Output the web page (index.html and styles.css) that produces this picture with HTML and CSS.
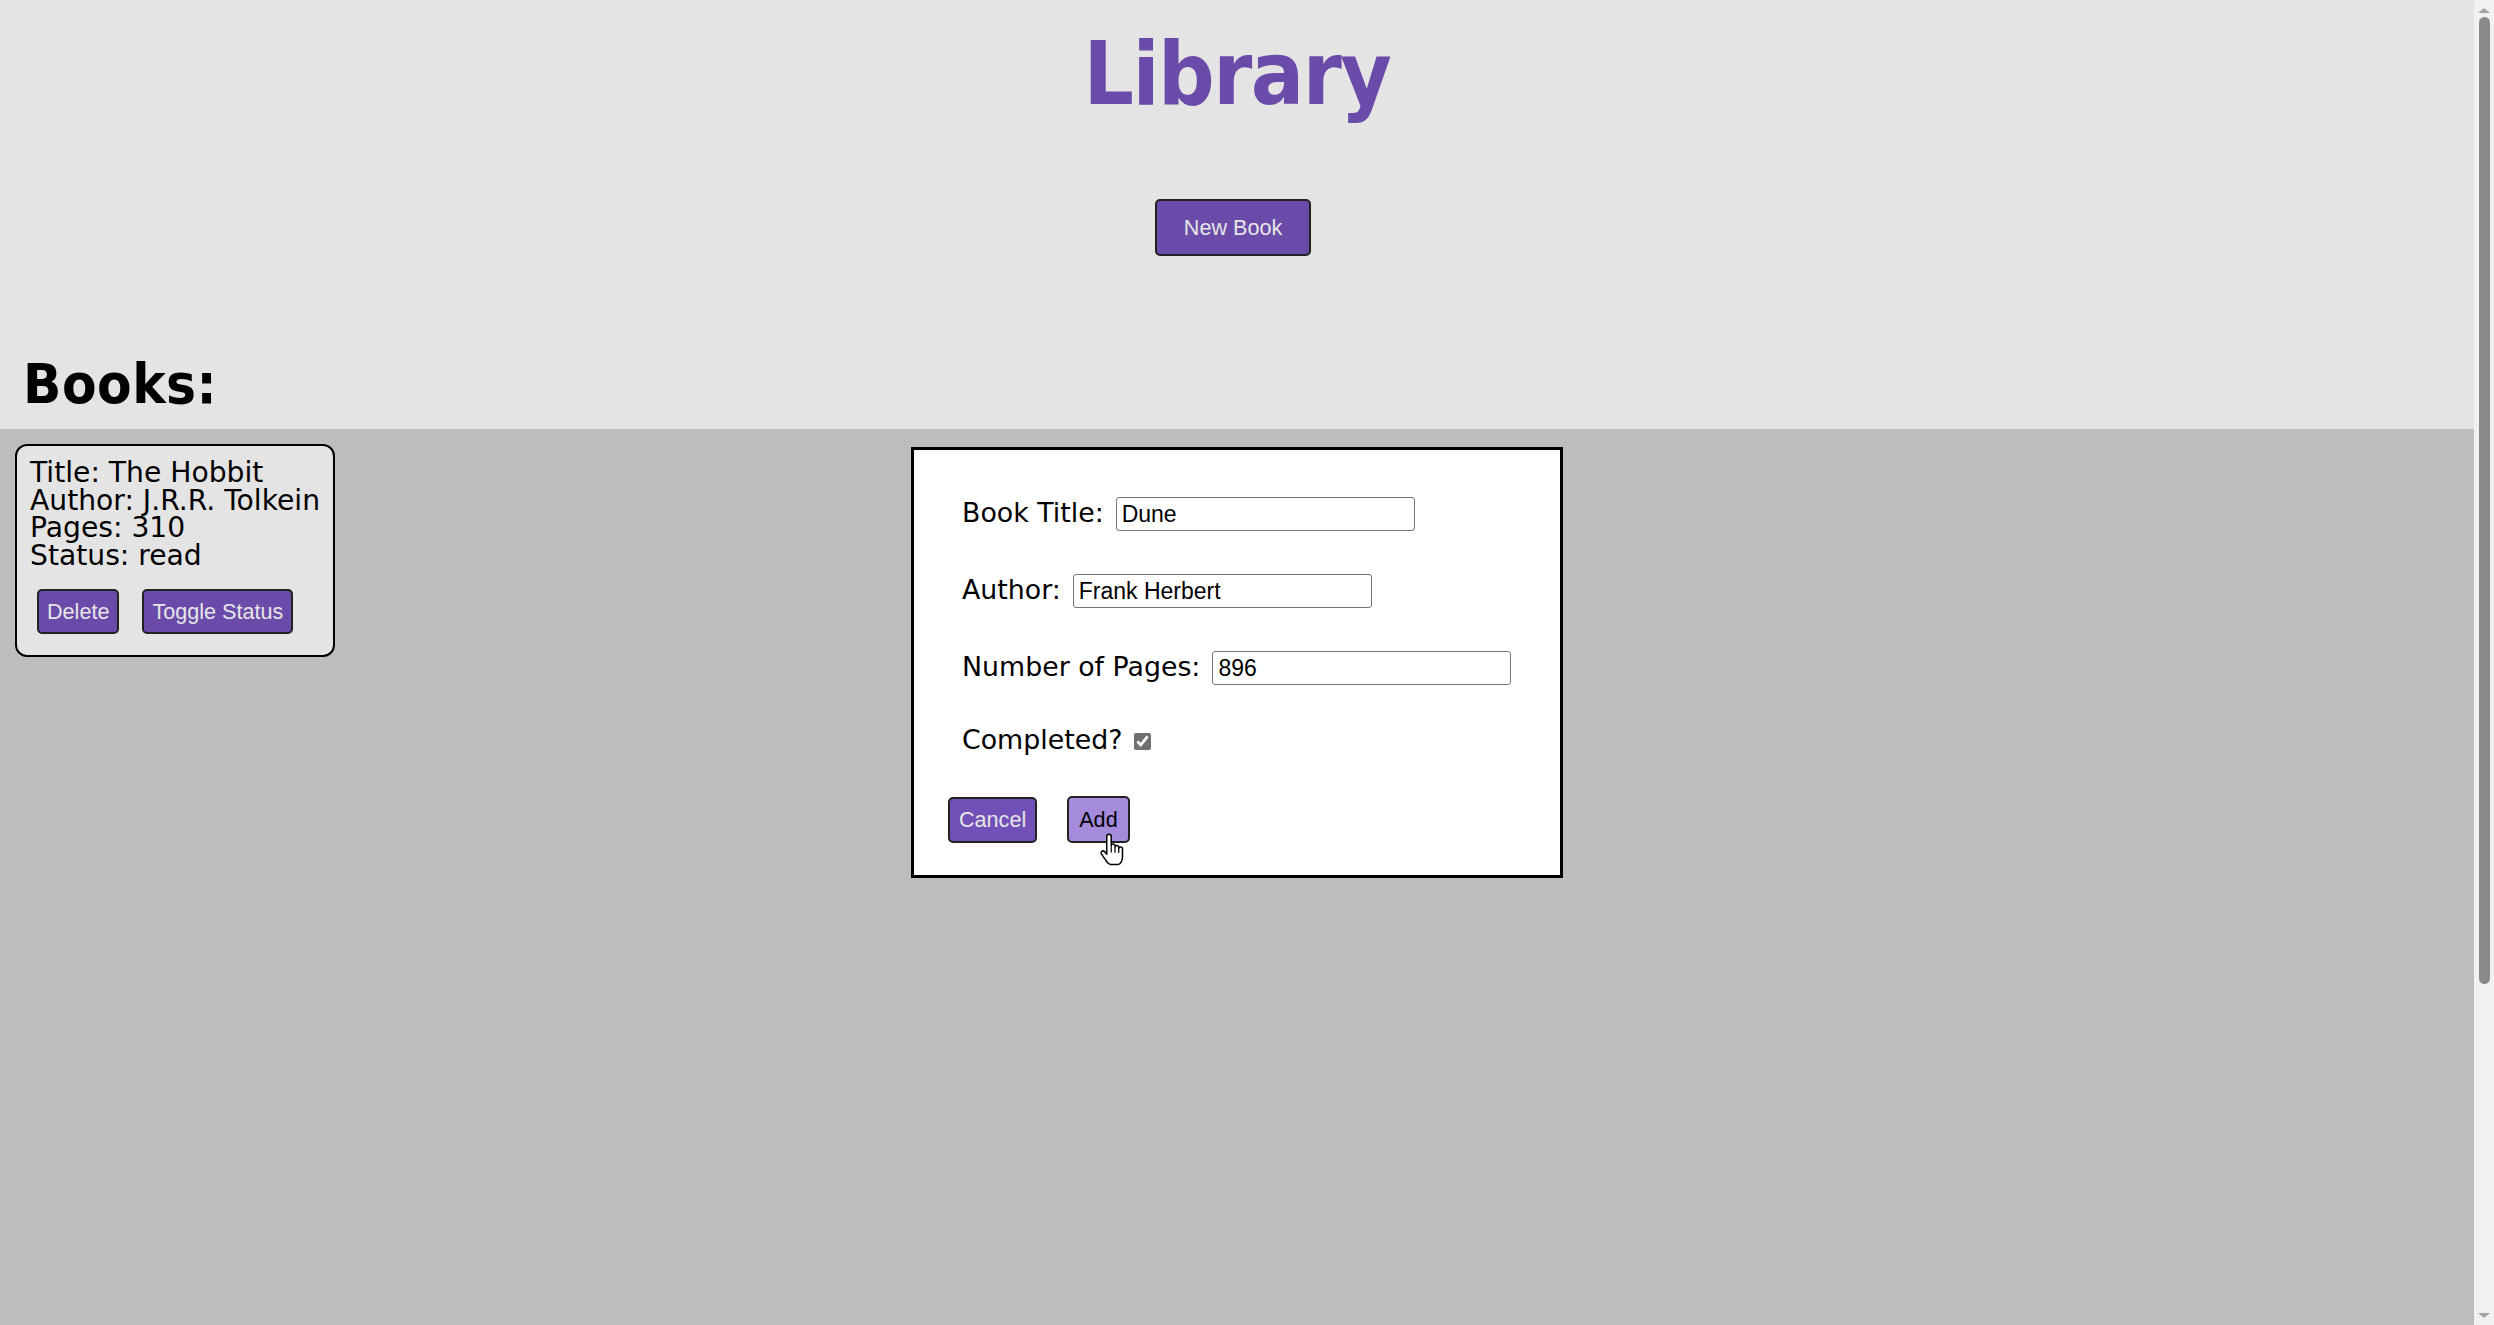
FILE: index.html
```html
<!DOCTYPE html>
<html lang="en">
<head>
<meta charset="utf-8">
<title>Library</title>
<link rel="stylesheet" href="styles.css">
</head>
<body>
<div class="window">
  <div class="page">
    <header class="top">
      <h1 class="brand">Library</h1>
      <button class="btn btn-new" type="button">New Book</button>
      <h2 class="section-title">Books:</h2>
    </header>
    <main class="shelf">
      <article class="card">
        <p class="card-line">Title: The Hobbit</p>
        <p class="card-line">Author: J.R.R. Tolkein</p>
        <p class="card-line">Pages: 310</p>
        <p class="card-line">Status: read</p>
        <div class="card-actions">
          <button class="btn btn-small" type="button">Delete</button>
          <button class="btn btn-small" type="button">Toggle Status</button>
        </div>
      </article>
    </main>
    <div class="dialog">
      <form class="book-form">
        <label class="form-row"><span class="form-label">Book Title:</span><input class="text-input" type="text" value="Dune"></label>
        <label class="form-row"><span class="form-label">Author:</span><input class="text-input" type="text" value="Frank Herbert"></label>
        <label class="form-row"><span class="form-label">Number of Pages:</span><input class="text-input" type="text" value="896"></label>
        <label class="form-row form-row-check"><span class="form-label">Completed?</span><input class="check" type="checkbox" checked></label>
        <div class="form-actions">
          <button class="btn btn-dialog" type="button">Cancel</button>
          <button class="btn btn-dialog btn-hover" type="button">Add
            <svg class="cursor" viewBox="0 0 17 22" width="26" height="33" aria-hidden="true">
              <path d="M5 2.3a1.5 1.5 0 0 1 3 0V8.6a1.25 1.25 0 0 1 2.5 0v0.9a1.25 1.25 0 0 1 2.5 0v1a1.25 1.25 0 0 1 2.5 0V16c0 2.6-1.4 5-3 5H7.6c-1.4 0-2.3-1.3-3.2-2.7L1.4 13.9a1.3 1.3 0 0 1 2.1-1.5L5 14.2Z" fill="#fff" stroke="#000" stroke-width="1" stroke-linejoin="round"/>
              <path d="M8 9v4M10.5 9.6v3.6M13 10.6v2.8" stroke="#000" stroke-width="0.8" fill="none"/>
            </svg>
          </button>
        </div>
      </form>
    </div>
  </div>
  <div class="scrollbar">
    <span class="arrow arrow-up"></span>
    <div class="track"><div class="thumb"></div></div>
    <span class="arrow arrow-down"></span>
  </div>
</div>
</body>
</html>
```

FILE: styles.css
```css
html, body {
  margin: 0;
  padding: 0;
  height: 100%;
  overflow: hidden;
}

body {
  font-family: "DejaVu Sans", Verdana, sans-serif;
  color: #000;
}

.window {
  display: flex;
  height: 100vh;
}

.page {
  flex: 1;
  display: flex;
  flex-direction: column;
  position: relative;
  min-width: 0;
}

.top {
  background: #e4e4e4;
  display: flex;
  flex-direction: column;
  align-items: center;
  padding: 30px 0 17px 0;
}

.brand {
  margin: 0;
  font-family: "DejaVu Sans Condensed", "DejaVu Sans", sans-serif;
  font-stretch: condensed;
  font-weight: bold;
  font-size: 88px;
  line-height: 88px;
  letter-spacing: -1.5px;
  color: #6a4baa;
}

.btn {
  font-family: "Liberation Sans", Arial, sans-serif;
  font-size: 21.6px;
  line-height: 25px;
  color: #e6e6e6;
  background: #6a4baa;
  border: 2px solid #222;
  border-radius: 5px;
  margin: 0;
  cursor: pointer;
}

.btn-new {
  margin-top: 81px;
  padding: 14px 27px;
  height: 57px;
  margin-left: -8px;
}

.section-title {
  align-self: flex-start;
  margin: 100px 0 0 0;
  padding-left: 23px;
  font-family: "DejaVu Sans Condensed", "DejaVu Sans", sans-serif;
  font-stretch: condensed;
  font-weight: bold;
  font-size: 56px;
  line-height: 56px;
  letter-spacing: 0.5px;
}

.shelf {
  flex: 1;
  background: #bdbdbd;
  padding: 15px;
  display: flex;
  align-items: flex-start;
}

.card {
  background: #e4e4e4;
  border: 2px solid #000;
  border-radius: 12px;
  padding: 13px 13px 13px 13px;
}

.card-line {
  margin: 0;
  font-size: 28.2px;
  line-height: 27.7px;
  white-space: nowrap;
}

.card-actions {
  display: flex;
  gap: 23px;
  margin: 19px 0 8px 7px;
}

.btn-small {
  height: 45px;
  padding: 8px 8px;
}

.dialog {
  position: absolute;
  inset: 0;
  margin: auto;
  width: 652px;
  height: 431px;
  box-sizing: border-box;
  background: #fff;
  border: 3px solid #000;
}

.book-form {
  display: flex;
  flex-direction: column;
  padding: 47px 0 0 34px;
}

.form-row {
  display: flex;
  align-items: center;
  gap: 12px;
  height: 34px;
  padding-left: 14px;
  margin-bottom: 43px;
}

.form-row-check {
  margin-top: -4px;
  margin-bottom: 38px;
}

.form-label {
  font-size: 26.8px;
  line-height: 34px;
  white-space: nowrap;
  position: relative;
  top: -1px;
}

.text-input {
  box-sizing: border-box;
  width: 299px;
  height: 34px;
  border: 1px solid #767676;
  border-radius: 3px;
  padding: 0 5px;
  margin: 0;
  font-family: "Liberation Sans", Arial, sans-serif;
  font-size: 23px;
  color: #000;
  background: #fff;
}

.check {
  width: 17px;
  height: 17px;
  margin: 0;
  accent-color: #707070;
}

.form-actions {
  display: flex;
  align-items: center;
  gap: 30px;
}

.btn-dialog {
  height: 46px;
  padding: 8px 9px;
  background: #7150b8;
  position: relative;
}

.btn-hover {
  background: #a58bdc;
  color: #000;
  height: 47px;
  padding: 8px 10px;
}

.cursor {
  position: absolute;
  left: 30px;
  top: 35px;
}

.scrollbar {
  width: 20px;
  background: #f1f1f1;
  display: flex;
  flex-direction: column;
  align-items: center;
}

.track {
  flex: 1;
  width: 100%;
  display: flex;
  justify-content: center;
  padding-top: 4px;
}

.thumb {
  width: 11px;
  height: 967px;
  background: #8a8a8a;
  border-radius: 6px;
}

.arrow {
  width: 0;
  height: 0;
  border-left: 6px solid transparent;
  border-right: 6px solid transparent;
}

.arrow-up {
  margin-top: 8px;
  border-bottom: 5px solid #a3a3a3;
}

.arrow-down {
  margin-bottom: 7px;
  border-top: 5px solid #a3a3a3;
}
```
